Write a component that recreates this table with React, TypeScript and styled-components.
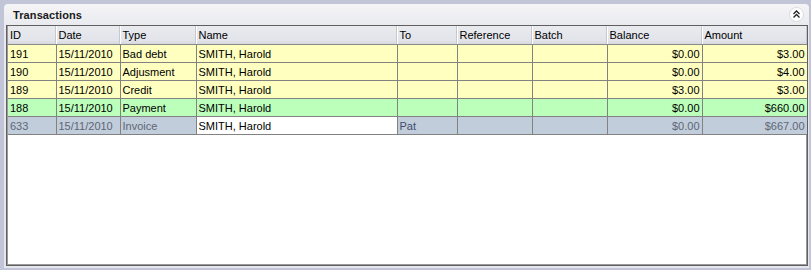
import React from "react";
import styled, { createGlobalStyle } from "styled-components";

const GlobalStyle = createGlobalStyle`
    html, body {
        margin: 0;
        padding: 0;
        background: #c2c5d8;
    }
    body {
        width: 811px;
        height: 270px;
        overflow: hidden;
        font-family: Tahoma, "Liberation Sans", Arial, sans-serif;
        font-size: 11px;
    }
`;

type Tone = "yellow" | "green" | "gray";

interface Txn {
    id: number;
    date: string;
    type: string;
    name: string;
    to: string;
    reference: string;
    batch: string;
    balance: string;
    amount: string;
    tone: Tone;
}

const rows: Txn[] = [
    {id: 191, date: "15/11/2010", type: "Bad debt", name: "SMITH, Harold", to: "", reference: "", batch: "", balance: "$0.00", amount: "$3.00", tone: "yellow"},
    {id: 190, date: "15/11/2010", type: "Adjusment", name: "SMITH, Harold", to: "", reference: "", batch: "", balance: "$0.00", amount: "$4.00", tone: "yellow"},
    {id: 189, date: "15/11/2010", type: "Credit", name: "SMITH, Harold", to: "", reference: "", batch: "", balance: "$3.00", amount: "$3.00", tone: "yellow"},
    {id: 188, date: "15/11/2010", type: "Payment", name: "SMITH, Harold", to: "", reference: "", batch: "", balance: "$0.00", amount: "$660.00", tone: "green"},
    {id: 633, date: "15/11/2010", type: "Invoice", name: "SMITH, Harold", to: "Pat", reference: "", batch: "", balance: "$0.00", amount: "$667.00", tone: "gray"}
];

const columns = [
    {key: "id", title: "ID", width: 48},
    {key: "date", title: "Date", width: 64},
    {key: "type", title: "Type", width: 76},
    {key: "name", title: "Name", width: 201},
    {key: "to", title: "To", width: 60},
    {key: "reference", title: "Reference", width: 75},
    {key: "batch", title: "Batch", width: 75},
    {key: "balance", title: "Balance", width: 95, right: true},
    {key: "amount", title: "Amount", width: 105, right: true}
];

const toneColors: Record<Tone, string> = {
    yellow: "#ffffc0",
    green: "#bbffbb",
    gray: "#c1cdda"
};

const Panel = styled.div`
    margin: 4px 2px 0 4px;
    height: 264px;
    border-radius: 4px 4px 0 0;
    background: linear-gradient(to bottom, #f5f5f7 0px, #e9eaef 22px, #e6e7ee 100%);
    display: flex;
    flex-direction: column;
    padding: 0 1px 2px 2px;
    box-sizing: border-box;
`;

const TitleBar = styled.div`
    height: 21px;
    display: flex;
    align-items: center;
    justify-content: space-between;
    padding: 0 4px 0 7px;
`;

const Title = styled.div`
    font-weight: bold;
    font-size: 11px;
    color: #1a1a1a;
    letter-spacing: 0.1px;
`;

const CollapseButton = styled.div`
    width: 15px;
    height: 15px;
    display: flex;
`;

const GridBox = styled.div`
    flex: 1;
    background: #ffffff;
    border: 1px solid #5f5f5f;
    box-shadow: inset 1px 0 0 #9a9a9a, inset -1px 0 0 #9a9a9a, inset 0 -1px 0 #9a9a9a;
    padding: 0 1px 1px 1px;
    overflow: hidden;
`;

const Table = styled.table`
    border-collapse: collapse;
    table-layout: fixed;
    width: 799px;
`;

const HeadCell = styled.th`
    height: 18px;
    padding: 0 0 0 2px;
    text-align: left;
    font-weight: normal;
    color: #000;
    background: linear-gradient(to bottom, #e8eaee 0%, #e2e4ea 80%, #d4d7de 100%);
    border-right: 1px solid #ffffff;
    box-shadow: inset -1px 0 0 #c6c8ce;
    border-bottom: 1px solid #8a8a8a;
    white-space: nowrap;
    overflow: hidden;
`;

const Row = styled.tr<{ $tone: Tone }>`
    background: ${p => toneColors[p.$tone]};
    color: ${p => (p.$tone === "gray" ? "#5f6677" : "#000000")};
`;

const Cell = styled.td<{ $right?: boolean; $focused?: boolean; $muted?: boolean }>`
    height: 17px;
    padding: 0 2px 0 2px;
    text-align: ${p => (p.$right ? "right" : "left")};
    border-right: 1px solid #828282;
    border-bottom: 1px solid #828282;
    white-space: nowrap;
    overflow: hidden;
    background: ${p => (p.$focused ? "#ffffff" : "transparent")};
    color: ${p => (p.$focused ? "#000000" : p.$muted ? "#3f4d6e" : "inherit")};
`;

function ChevronsUp() {
    return (
        <svg width="15" height="15" viewBox="0 0 15 15">
            <circle cx="7.5" cy="7.5" r="7" fill="#ffffff" stroke="#d8d9e0" strokeWidth="1" />
            <polyline points="4.5,7 7.5,4 10.5,7" fill="none" stroke="#222" strokeWidth="1.3" />
            <polyline points="4.5,10.5 7.5,7.5 10.5,10.5" fill="none" stroke="#222" strokeWidth="1.3" />
        </svg>
    );
}

export default function App() {
    return (
        <>
            <GlobalStyle />
            <Panel>
                <TitleBar>
                    <Title>Transactions</Title>
                    <CollapseButton><ChevronsUp /></CollapseButton>
                </TitleBar>
                <GridBox>
                    <Table>
                        <colgroup>
                            {columns.map(c => <col key={c.key} style={{width: c.width}} />)}
                        </colgroup>
                        <thead>
                            <tr>
                                {columns.map(c => <HeadCell key={c.key}>{c.title}</HeadCell>)}
                            </tr>
                        </thead>
                        <tbody>
                            {rows.map(r => (
                                <Row key={r.id} $tone={r.tone}>
                                    {columns.map(c => (
                                        <Cell
                                            key={c.key}
                                            $right={c.right}
                                            $focused={r.tone === "gray" && c.key === "name"}
                                            $muted={r.tone === "gray" && c.key === "to"}
                                        >
                                            {String(r[c.key as keyof Txn])}
                                        </Cell>
                                    ))}
                                </Row>
                            ))}
                        </tbody>
                    </Table>
                </GridBox>
            </Panel>
        </>
    );
}
